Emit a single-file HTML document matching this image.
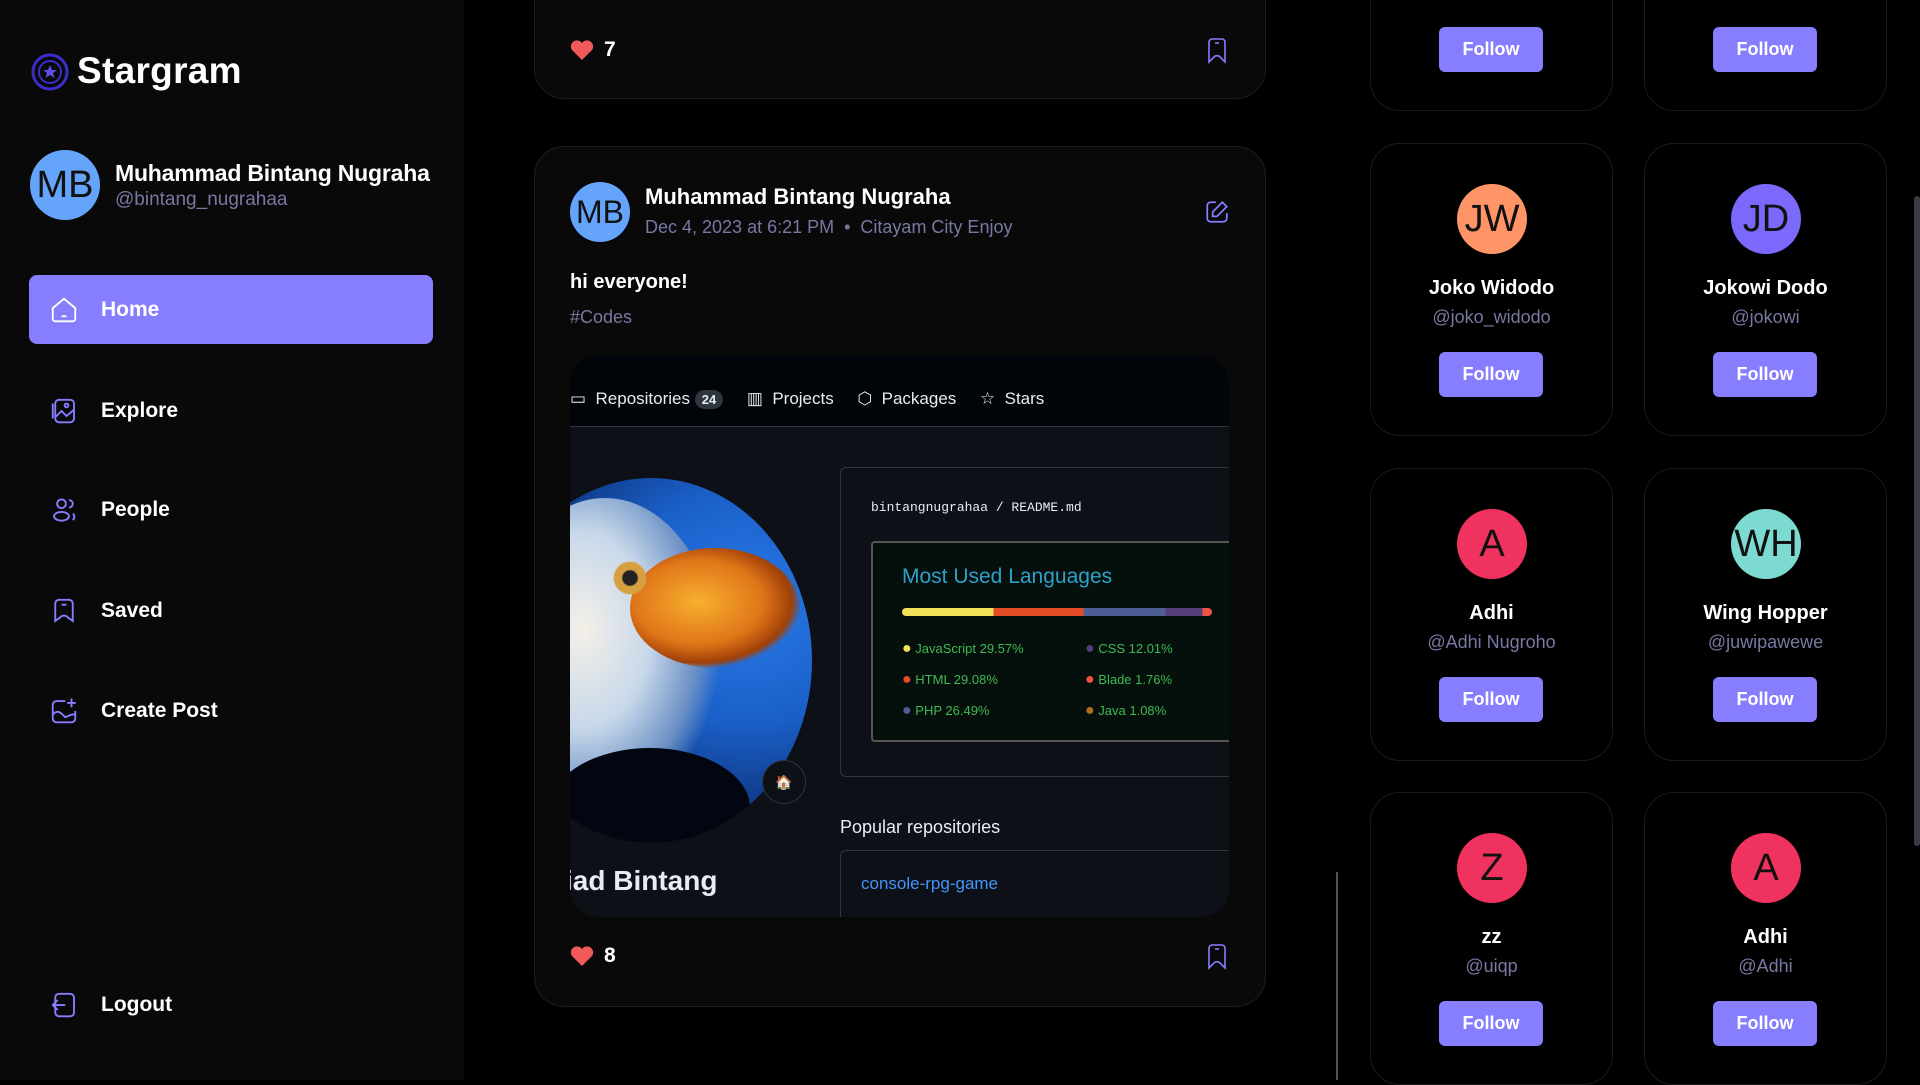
<!DOCTYPE html>
<html><head><meta charset="utf-8"><style>
*{box-sizing:border-box;margin:0;padding:0}
body{width:1920px;height:1080px;overflow:hidden;background:#000;font-family:"Liberation Sans",sans-serif;color:#fff;position:relative}
.abs{position:absolute}
.side{left:0;top:0;width:464px;height:1080px;background:#09090a}
.nav{position:absolute;left:29px;width:404px;height:69px;display:flex;align-items:center;padding-left:20px;font-size:21px;font-weight:bold;border-radius:8px}
.nav svg{width:30px;height:30px;margin-right:22px}
.card{position:absolute;background:#09090a;border:1px solid #1c1c1f;border-radius:30px}
.muted{color:#7878a3}
.uc{position:absolute;width:243px;height:293px;border:1px solid #1a1a1d;border-radius:30px;background:#000;text-align:center}
.uc .av{position:absolute;left:86px;top:40px;width:70px;height:70px;border-radius:50%;color:#111;font-size:38px;line-height:70px}
.uc .n{position:absolute;left:0;right:0;top:133px;font-size:20px;font-weight:bold}
.uc .h{position:absolute;left:0;right:0;top:163px;font-size:18px;color:#7878a3}
.btn{position:absolute;left:68px;width:104px;height:45px;background:#877eff;border-radius:6px;font-size:18px;font-weight:bold;line-height:45px;color:#fff}
</style></head><body>
<div class="abs side">
  <svg class="abs" style="left:31px;top:53px" width="38" height="38" viewBox="0 0 38 38"><circle cx="19" cy="19" r="17" fill="none" stroke="#3b2fc9" stroke-width="3"/><circle cx="19" cy="19" r="11" fill="none" stroke="#3b2fc9" stroke-width="2"/><path d="M19 12l2 5h5l-4 3 1.6 5L19 22l-4.6 3 1.6-5-4-3h5z" fill="#5b4fe9"/></svg>
  <div class="abs" style="left:77px;top:50px;font-size:37px;font-weight:bold;letter-spacing:0.3px">Stargram</div>
  <div class="abs" style="left:30px;top:150px;width:70px;height:70px;border-radius:50%;background:#64a4fb;color:#111;font-size:38px;line-height:70px;text-align:center">MB</div>
  <div class="abs" style="left:115px;top:160px;font-size:23px;font-weight:bold;letter-spacing:-0.2px">Muhammad Bintang Nugraha</div>
  <div class="abs muted" style="left:115px;top:189px;font-size:19px">@bintang_nugrahaa</div>
  <div class="nav" style="top:275px;background:#877eff"><svg viewBox="0 0 24 24" fill="none" stroke="#fff" stroke-width="1.5"><path d="M3 10.5L12 3l9 7.5V19a2 2 0 0 1-2 2H5a2 2 0 0 1-2-2z"/><path d="M10 17h4"/></svg>Home</div>
  <div class="nav" style="top:376px"><svg viewBox="0 0 24 24" fill="none" stroke="#877eff" stroke-width="1.5"><rect x="5" y="3" width="15" height="18" rx="3"/><path d="M3 6v12M5 17l5-5 4 4 6-5"/><circle cx="14" cy="7.5" r="1.5"/></svg>Explore</div>
  <div class="nav" style="top:475px"><svg viewBox="0 0 24 24" fill="none" stroke="#877eff" stroke-width="1.5"><circle cx="10" cy="7" r="3.5"/><ellipse cx="10" cy="17" rx="6" ry="3.5"/><path d="M16 4a3 3 0 0 1 0 6M19 15a3 3 0 0 1 0 5"/></svg>People</div>
  <div class="nav" style="top:576px"><svg viewBox="0 0 24 24" fill="none" stroke="#877eff" stroke-width="1.5"><path d="M5 6a3 3 0 0 1 3-3h8a3 3 0 0 1 3 3v14l-4-3a4 4 0 0 0-6 0l-4 3z"/><path d="M10 7h4"/></svg>Saved</div>
  <div class="nav" style="top:676px"><svg viewBox="0 0 24 24" fill="none" stroke="#877eff" stroke-width="1.5"><path d="M13 4H6a3 3 0 0 0-3 3v11a3 3 0 0 0 3 3h12a3 3 0 0 0 3-3v-6"/><path d="M3 15c4-5 7-1 10 2 3-1 5-3 8-2M18 2v7M14.5 5.5h7"/></svg>Create Post</div>
  <div class="nav" style="top:970px"><svg viewBox="0 0 24 24" fill="none" stroke="#877eff" stroke-width="1.5"><rect x="5" y="3" width="15" height="18" rx="3"/><path d="M3 12h10M7 8l-4 4 4 4"/></svg>Logout</div>
</div>

<div class="card" style="left:534px;top:-40px;width:732px;height:139px"></div>
<svg class="abs" style="left:570px;top:39px" width="24" height="22" viewBox="0 0 24 22"><path d="M12 21L2 11A5.5 5.5 0 0 1 12 4a5.5 5.5 0 0 1 10 7z" fill="#f25a5a"/></svg>
<div class="abs" style="left:604px;top:38px;font-size:21px;font-weight:bold">7</div>
<svg class="abs" style="left:1205px;top:37px" width="24" height="28" viewBox="0 0 24 28" fill="none" stroke="#877eff" stroke-width="1.6"><path d="M4 5a3 3 0 0 1 3-3h10a3 3 0 0 1 3 3v20l-5-5a4 4 0 0 0-6 0l-5 5z"/><path d="M10 6h4"/></svg>

<div class="card" style="left:534px;top:146px;width:732px;height:861px"></div>
<div class="abs" style="left:570px;top:182px;width:60px;height:60px;border-radius:50%;background:#64a4fb;color:#111;font-size:32px;line-height:60px;text-align:center">MB</div>
<div class="abs" style="left:645px;top:184px;font-size:22px;font-weight:bold">Muhammad Bintang Nugraha</div>
<div class="abs muted" style="left:645px;top:217px;font-size:18px">Dec 4, 2023 at 6:21 PM &nbsp;•&nbsp; Citayam City Enjoy</div>
<svg class="abs" style="left:1204px;top:199px" width="26" height="26" viewBox="0 0 24 24" fill="none" stroke="#877eff" stroke-width="1.6"><path d="M11 3H6a3 3 0 0 0-3 3v12a3 3 0 0 0 3 3h12a3 3 0 0 0 3-3v-5"/><path d="M17 3l4 4-9 9H8v-4z"/></svg>
<div class="abs" style="left:570px;top:271px;font-size:20px;font-weight:bold">hi everyone!</div>
<div class="abs muted" style="left:570px;top:307px;font-size:18px">#Codes</div>

<div class="abs" style="left:570px;top:355px;width:659px;height:562px;border-radius:28px;overflow:hidden;background:#0d1117">
  <div class="abs" style="left:0;top:0;width:659px;height:72px;background:#010409;border-bottom:1px solid #30363d"></div>
  <div class="abs" style="left:0;top:34px;font-size:17px;color:#e6edf3;white-space:nowrap">▭ &nbsp;Repositories <span style="background:#30363d;border-radius:10px;padding:2px 7px;font-size:13px;font-weight:bold">24</span> &nbsp;&nbsp;&nbsp; ▥ &nbsp;Projects &nbsp;&nbsp;&nbsp; ⬡ &nbsp;Packages &nbsp;&nbsp;&nbsp; ☆ &nbsp;Stars</div>
  <div class="abs" style="left:-80px;top:123px;width:322px;height:365px;border-radius:50%;overflow:hidden;background:radial-gradient(ellipse at 80% 35%,#2a7be8 0,#1a5fc8 35%,#0b2a6a 70%,#050a1a 100%)">
    <div class="abs" style="left:0;top:20px;width:230px;height:330px;border-radius:50%;background:radial-gradient(ellipse at 40% 40%,#f4f0e8 0,#c8d8ea 35%,#6a8fc4 60%,transparent 72%)"></div>
    <div class="abs" style="left:140px;top:70px;width:170px;height:120px;border-radius:50%;background:radial-gradient(ellipse at 40% 45%,#f7b030,#e07518 45%,#a04008 65%,transparent 72%)"></div>
    <div class="abs" style="left:120px;top:80px;width:40px;height:40px;border-radius:50%;background:radial-gradient(circle,#222 0 25%,#d6a040 30% 55%,transparent 60%)"></div>
    <div class="abs" style="left:60px;top:270px;width:200px;height:120px;background:#030510;border-radius:50% 50% 0 0"></div>
  </div>
  <div class="abs" style="left:192px;top:405px;width:44px;height:44px;border-radius:50%;background:#0d1117;border:1px solid #30363d;text-align:center;line-height:42px;font-size:14px">🏠</div>
  <div class="abs" style="left:-5px;top:510px;font-size:28px;font-weight:bold;color:#e6edf3">iad Bintang</div>
  <div class="abs" style="left:270px;top:112px;width:420px;height:310px;border:1px solid #30363d;border-radius:6px"></div>
  <div class="abs" style="left:301px;top:145px;font-family:'Liberation Mono',monospace;font-size:13px;color:#e6edf3">bintangnugrahaa / README.md</div>
  <div class="abs" style="left:301px;top:186px;width:400px;height:201px;border:2px solid #555;border-radius:4px;background:#05100d"></div>
  <div class="abs" style="left:332px;top:210px;font-size:21px;color:#2ea0c8">Most Used Languages</div>
  <div class="abs" style="left:332px;top:253px;width:310px;height:8px;border-radius:4px;background:linear-gradient(90deg,#f1e05a 0 29.5%,#e34c26 29.5% 58.6%,#4f5d95 58.6% 85%,#563d7c 85% 97%,#f05340 97%)"></div>
  <div class="abs" style="left:332px;top:278px;font-size:13px;color:#3fb950;line-height:31px">
    <div><span style="color:#f1e05a;font-size:16px">●</span> JavaScript 29.57%</div><div><span style="color:#e34c26;font-size:16px">●</span> HTML 29.08%</div><div><span style="color:#4f5d95;font-size:16px">●</span> PHP 26.49%</div></div>
  <div class="abs" style="left:515px;top:278px;font-size:13px;color:#3fb950;line-height:31px">
    <div><span style="color:#563d7c;font-size:16px">●</span> CSS 12.01%</div><div><span style="color:#f05340;font-size:16px">●</span> Blade 1.76%</div><div><span style="color:#b07219;font-size:16px">●</span> Java 1.08%</div></div>
  <div class="abs" style="left:270px;top:462px;font-size:18px;color:#e6edf3">Popular repositories</div>
  <div class="abs" style="left:270px;top:495px;width:420px;height:100px;border:1px solid #30363d;border-radius:6px"></div>
  <div class="abs" style="left:291px;top:519px;font-size:17px;color:#4493f8">console-rpg-game</div>
</div>
<svg class="abs" style="left:570px;top:945px" width="24" height="22" viewBox="0 0 24 22"><path d="M12 21L2 11A5.5 5.5 0 0 1 12 4a5.5 5.5 0 0 1 10 7z" fill="#f25a5a"/></svg>
<div class="abs" style="left:604px;top:944px;font-size:21px;font-weight:bold">8</div>
<svg class="abs" style="left:1205px;top:943px" width="24" height="28" viewBox="0 0 24 28" fill="none" stroke="#877eff" stroke-width="1.6"><path d="M4 5a3 3 0 0 1 3-3h10a3 3 0 0 1 3 3v20l-5-5a4 4 0 0 0-6 0l-5 5z"/><path d="M10 6h4"/></svg>

<div class="abs" style="left:1336px;top:872px;width:2px;height:208px;background:#555"></div>
<div class="abs" style="left:1914px;top:196px;width:6px;height:650px;background:#3a3a45;border-radius:3px"></div>

<div class="uc" style="left:1370px;top:-182px"><div class="btn" style="top:208px">Follow</div></div>
<div class="uc" style="left:1644px;top:-182px"><div class="btn" style="top:208px">Follow</div></div>

<div class="uc" style="left:1370px;top:143px"><div class="av" style="background:#ff9566">JW</div><div class="n">Joko Widodo</div><div class="h">@joko_widodo</div><div class="btn" style="top:208px">Follow</div></div>
<div class="uc" style="left:1644px;top:143px"><div class="av" style="background:#7b69fb">JD</div><div class="n">Jokowi Dodo</div><div class="h">@jokowi</div><div class="btn" style="top:208px">Follow</div></div>

<div class="uc" style="left:1370px;top:468px"><div class="av" style="background:#f0325e">A</div><div class="n">Adhi</div><div class="h">@Adhi Nugroho</div><div class="btn" style="top:208px">Follow</div></div>
<div class="uc" style="left:1644px;top:468px"><div class="av" style="background:#7cdad0">WH</div><div class="n">Wing Hopper</div><div class="h">@juwipawewe</div><div class="btn" style="top:208px">Follow</div></div>

<div class="uc" style="left:1370px;top:792px"><div class="av" style="background:#f0325e">Z</div><div class="n">zz</div><div class="h">@uiqp</div><div class="btn" style="top:208px">Follow</div></div>
<div class="uc" style="left:1644px;top:792px"><div class="av" style="background:#f0325e">A</div><div class="n">Adhi</div><div class="h">@Adhi</div><div class="btn" style="top:208px">Follow</div></div>
</body></html>
